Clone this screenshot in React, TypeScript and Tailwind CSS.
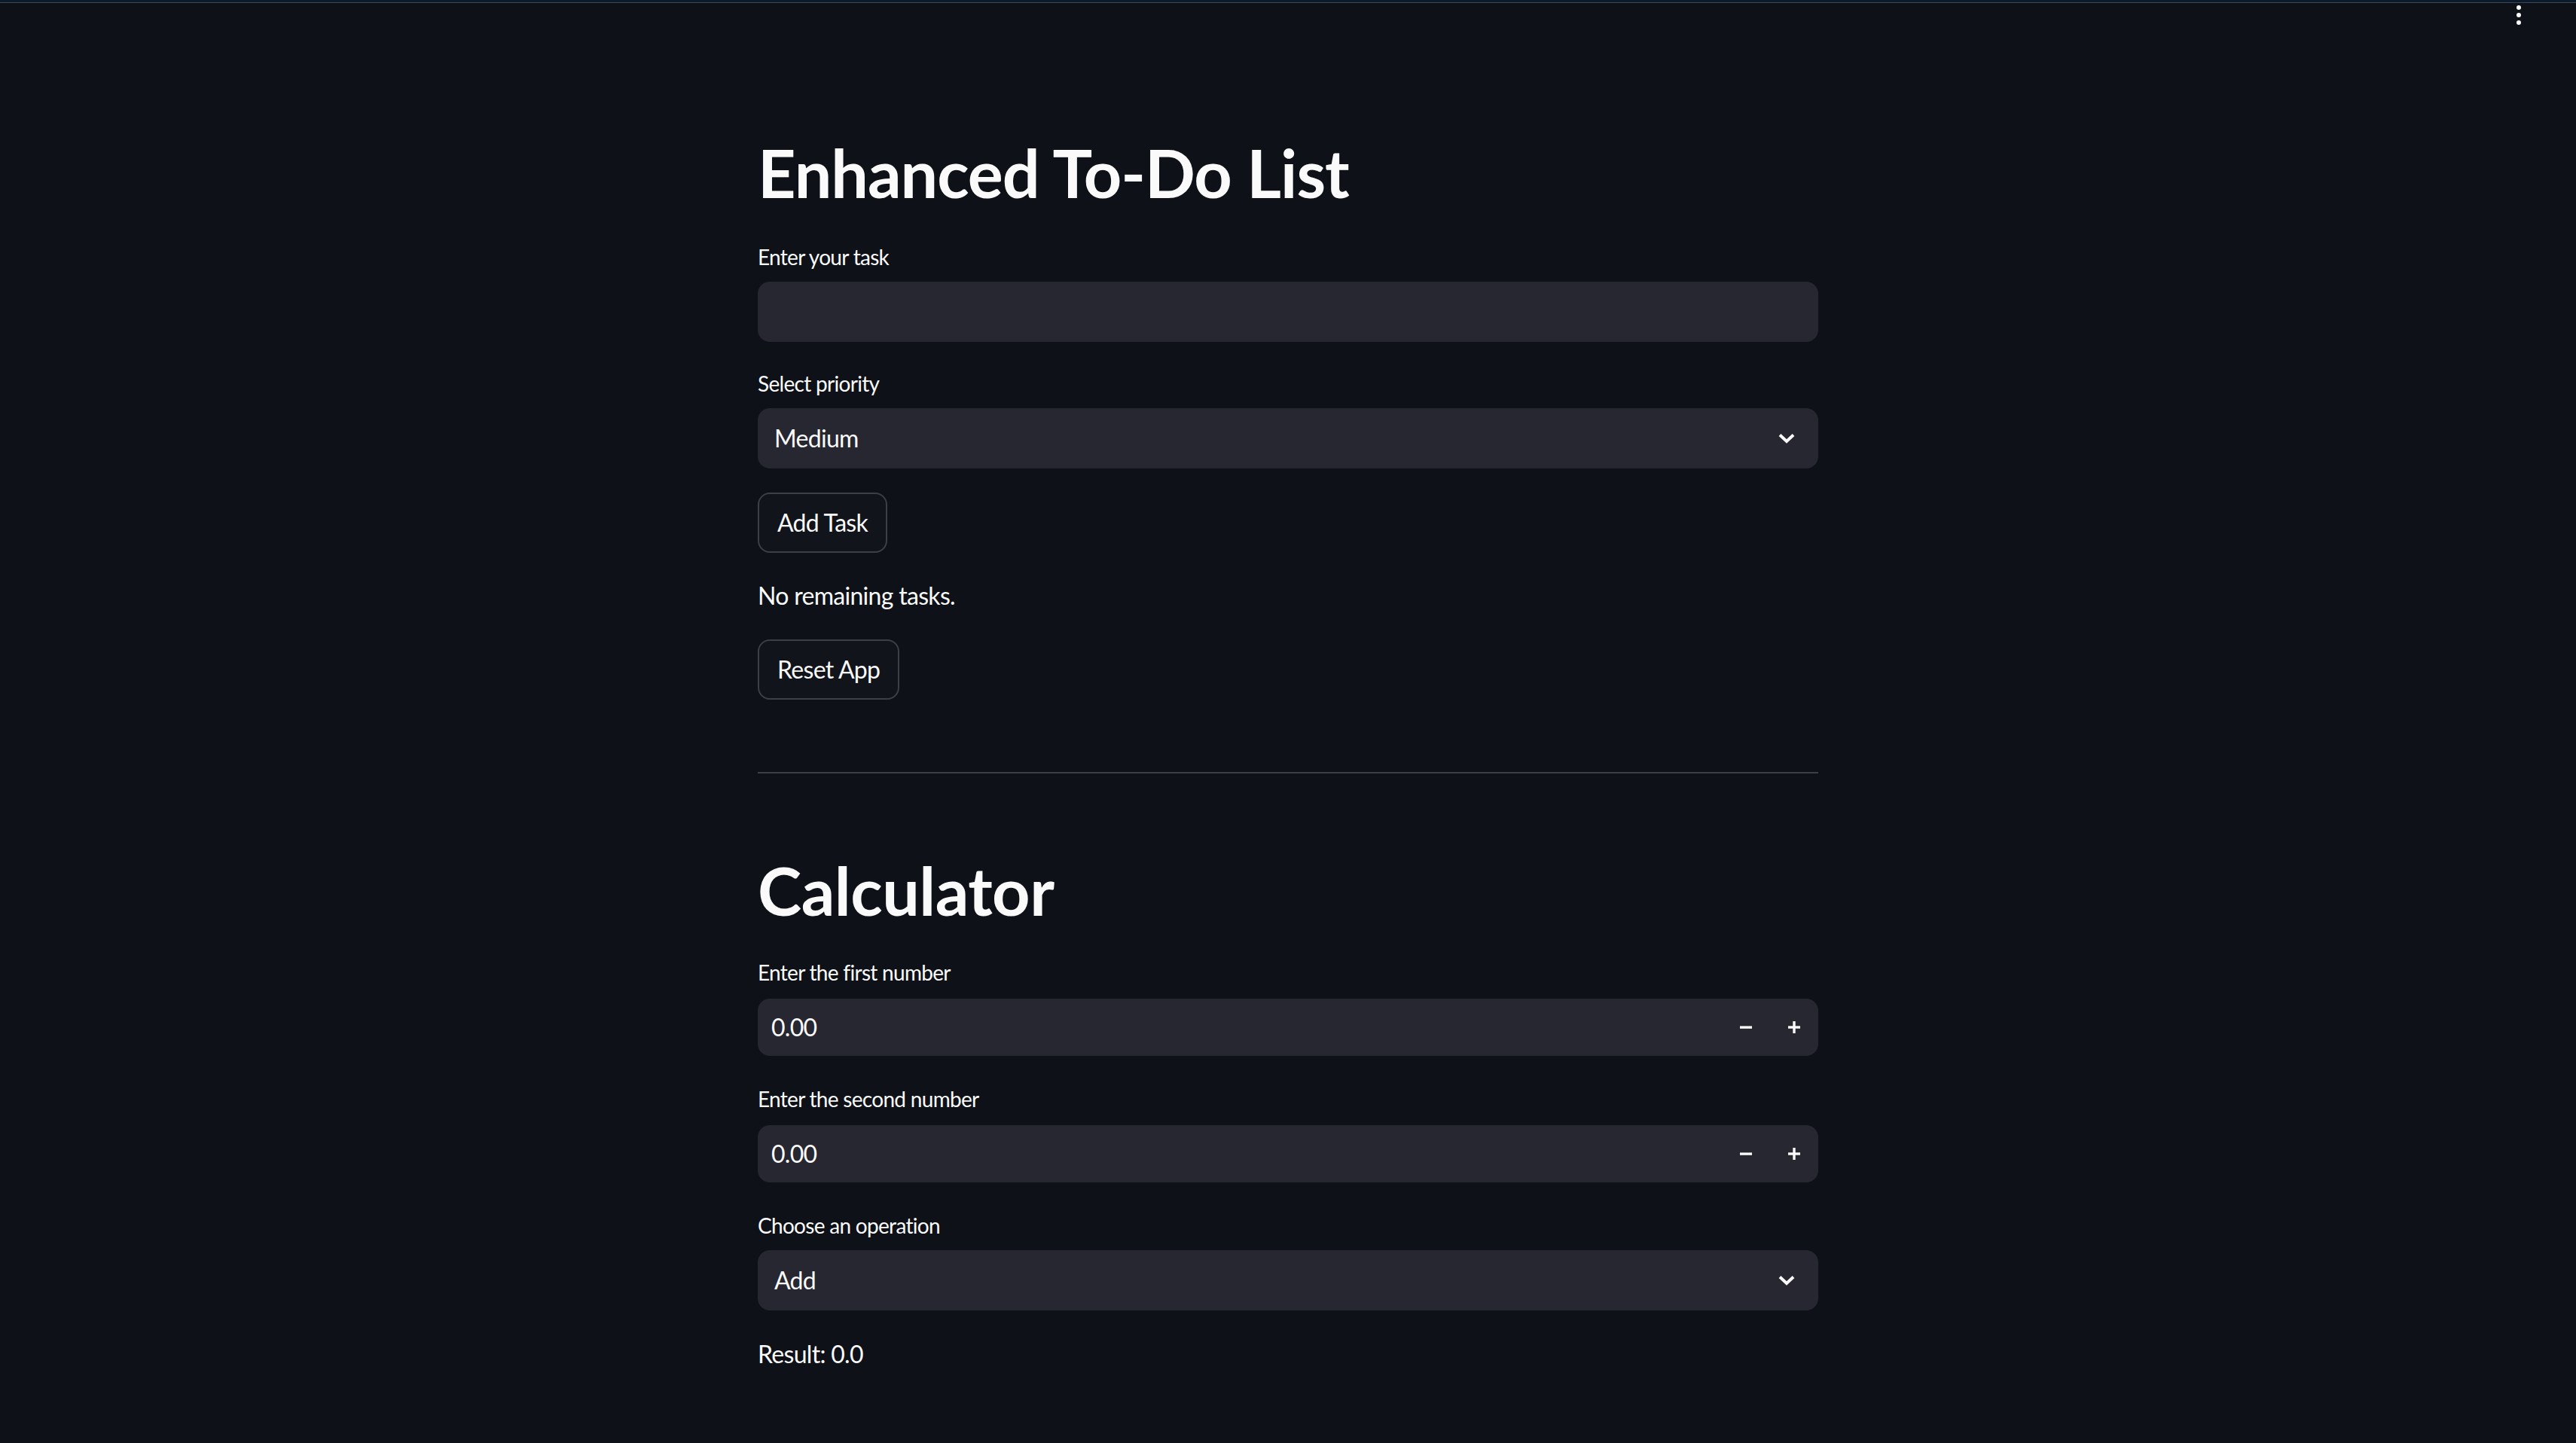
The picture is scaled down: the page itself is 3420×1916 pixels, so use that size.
import React from "react";

function Chevron() {
  return (
    <svg viewBox="0 0 24 16" className="w-[24px] h-[16px]" fill="none">
      <polyline points="3,3.5 12,12 21,3.5" stroke="#fafafa" strokeWidth="4" strokeLinejoin="miter" />
    </svg>
  );
}

function Label({ text, className = "" }: { text: string; className?: string }) {
  return (
    <div className={"text-[28px] leading-[40px] tracking-[-0.7px] text-[#fafafa] " + className}>{text}</div>
  );
}

function SelectBox({ value }: { value: string }) {
  return (
    <div className="h-[80px] w-full rounded-[16px] bg-[#262730] flex items-center justify-between pl-[22px] pr-[30px]">
      <span className="text-[32px] tracking-[-0.7px] text-[#fafafa]">{value}</span>
      <Chevron />
    </div>
  );
}

function NumberBox({ value }: { value: string }) {
  return (
    <div className="h-[76px] w-full rounded-[16px] bg-[#262730] flex items-center">
      <div className="flex-1 pl-[18px] text-[32px] tracking-[-0.7px] text-[#fafafa]">{value}</div>
      <div className="w-[64px] h-full flex items-center justify-center">
        <svg viewBox="0 0 16 16" className="w-[16px] h-[16px]">
          <rect x="0" y="6.4" width="16" height="3.4" fill="#fafafa" />
        </svg>
      </div>
      <div className="w-[64px] h-full flex items-center justify-center">
        <svg viewBox="0 0 16 16" className="w-[16px] h-[16px]">
          <rect x="0" y="6.3" width="16" height="3.4" fill="#fafafa" />
          <rect x="6.3" y="0" width="3.4" height="16" fill="#fafafa" />
        </svg>
      </div>
    </div>
  );
}

function Button({ text }: { text: string }) {
  return (
    <div className="h-[80px] inline-flex items-center px-[24px] rounded-[16px] border-2 border-[#3d3f46] bg-[#11141b] text-[32px] tracking-[-0.7px] text-[#fafafa] self-start">
      {text}
    </div>
  );
}

export default function App() {
  return (
    <div className="relative w-full min-h-[1916px] bg-[#0e1117] font-[Lato,'Liberation_Sans',sans-serif] text-[#fafafa]">
      <div className="h-[3px] bg-[#0d1a2c]" />
      <div className="h-[1px] bg-[#3c4858]" />
      <div className="absolute top-[7px] right-[73px] flex flex-col gap-[4px]">
        <div className="w-[6px] h-[6px] rounded-full bg-[#fafafa]" />
        <div className="w-[6px] h-[6px] rounded-full bg-[#fafafa]" />
        <div className="w-[6px] h-[6px] rounded-full bg-[#fafafa]" />
      </div>

      <div className="w-[1408px] mx-auto flex flex-col">
        <h1 className="mt-[172px] text-[88px] leading-[106px] font-bold tracking-[-1px]">Enhanced To-Do List</h1>
        <Label text="Enter your task" className="mt-[39px] mb-[13px]" />
        <div className="h-[80px] w-full rounded-[16px] bg-[#262730]" />
        <Label text="Select priority" className="mt-[35px] mb-[13px]" />
        <SelectBox value="Medium" />
        <div className="mt-[32px] flex">
          <Button text="Add Task" />
        </div>
        <div className="mt-[33px] text-[32px] leading-[48px] tracking-[-0.7px]">No remaining tasks.</div>
        <div className="mt-[34px] flex">
          <Button text="Reset App" />
        </div>
        <div className="mt-[96px] h-[2px] bg-[#3d3f46]" />
        <h1 className="mt-[102px] text-[88px] leading-[106px] font-bold tracking-[-0.5px]">Calculator</h1>
        <Label text="Enter the first number" className="mt-[36px] mb-[15px]" />
        <NumberBox value="0.00" />
        <Label text="Enter the second number" className="mt-[37px] mb-[15px]" />
        <NumberBox value="0.00" />
        <Label text="Choose an operation" className="mt-[37px] mb-[13px]" />
        <SelectBox value="Add" />
        <div className="mt-[34px] text-[32px] leading-[48px] tracking-[-0.7px]">Result: 0.0</div>
      </div>
    </div>
  );
}
